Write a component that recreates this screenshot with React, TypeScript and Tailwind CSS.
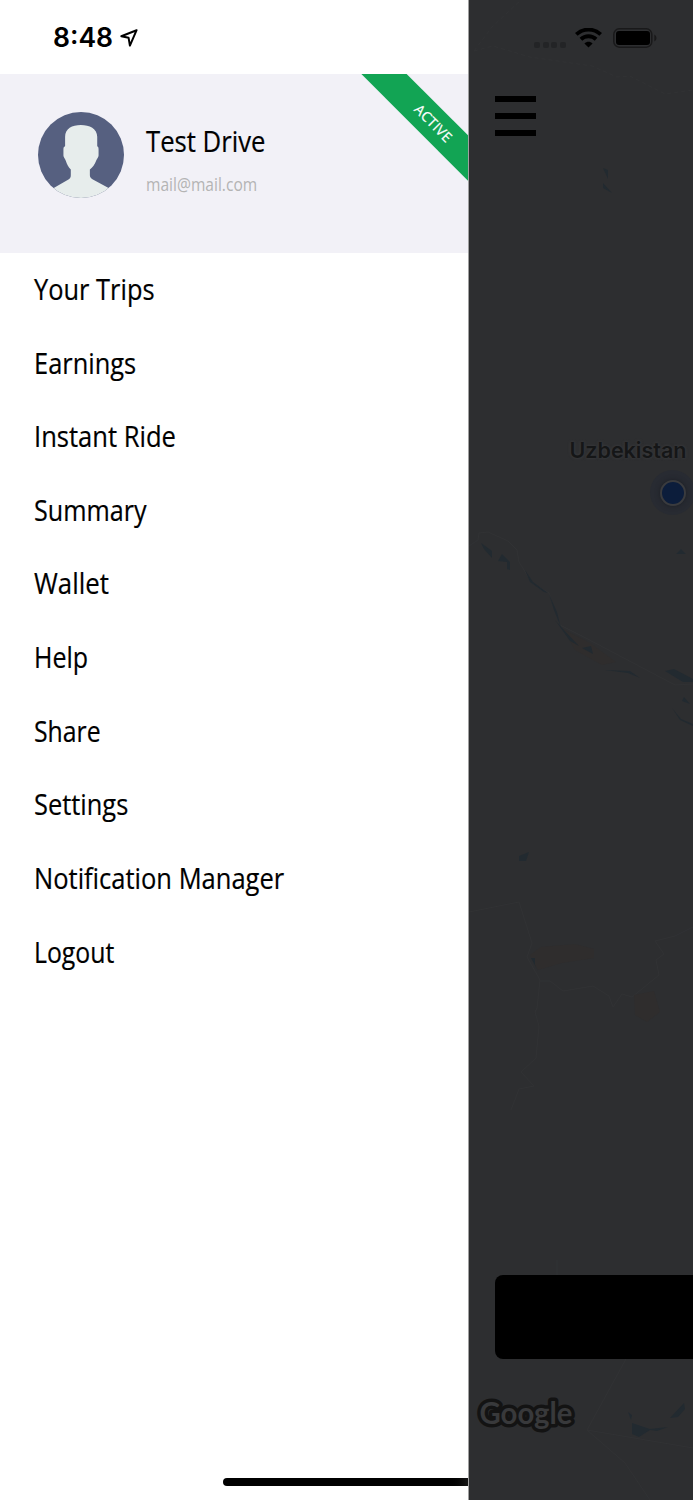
interface MenuItem {
    label: string;
    className: string;
}

const menuItems: MenuItem[] = [
    { label: 'Your Trips', className: 'scale-x-[0.892]' },
    { label: 'Earnings', className: 'scale-x-[0.892]' },
    { label: 'Instant Ride', className: 'scale-x-[0.897]' },
    { label: 'Summary', className: 'scale-x-[0.882]' },
    { label: 'Wallet', className: 'scale-x-[0.905]' },
    { label: 'Help', className: 'scale-x-[0.878]' },
    { label: 'Share', className: 'scale-x-[0.87]' },
    { label: 'Settings', className: 'scale-x-[0.892]' },
    { label: 'Notification Manager', className: 'scale-x-[0.895]' },
    { label: 'Logout', className: 'scale-x-[0.87]' },
];

function LocationArrow() {
    return (
        <svg className="h-[20px] w-[20px]" viewBox="0 0 20 20" fill="none">
            <path
                d="M17.6 2.2L2.3 8.2L9.6 9.8L10.9 17.6Z"
                stroke="#000"
                strokeWidth="2"
                strokeLinejoin="round"
            />
        </svg>
    );
}

function Avatar() {
    return (
        <svg className="h-[86px] w-[86px] shrink-0" viewBox="116 334 257 257">
            <clipPath id="avatar-clip">
                <circle cx="244.5" cy="462.5" r="128.5" />
            </clipPath>
            <g clipPath="url(#avatar-clip)">
                <rect x="116" y="334" width="257" height="257" fill="#566080" />
                <path
                    d="M244 373C218 373 197 384 197 408V436C193 437 192 440 192 446V464C192 470 197 473 199 480C203 491 207 500 214 506V523C214 529 212 533 207 536L163 561L110 595V610H380V595L327 561L280 536C275 533 271 529 271 523V506C279 500 286 490 290 479C292 473 297 470 297 464V446C297 440 296 437 293 436V408C293 384 270 373 244 373Z"
                    fill="#e7edec"
                />
            </g>
        </svg>
    );
}

function WifiIcon() {
    return (
        <svg className="h-[20px] w-[27px]" viewBox="0 0 27 20" fill="none" stroke="#000">
            <path d="M1.3 6.4C8.2 0 18.8 0 25.7 6.4" strokeWidth="3.9" />
            <path d="M5.9 11.2C10.2 7.2 16.8 7.2 21.1 11.2" strokeWidth="3.9" />
            <path d="M9.4 15.4C11.8 13.2 15.2 13.2 17.6 15.4L13.5 19.4Z" fill="#000" stroke="none" />
        </svg>
    );
}

function BatteryIcon() {
    return (
        <svg className="h-[20px] w-[44px]" viewBox="0 0 44 20">
            <rect x="0.8" y="0.8" width="38" height="18.4" rx="5.5" fill="none" stroke="#19191a" strokeWidth="1.5" />
            <rect x="3" y="3" width="34" height="14" rx="3" fill="#000" />
            <path d="M41.3 6.6C44.2 8 44.2 12 41.3 13.4Z" fill="#19191a" />
        </svg>
    );
}

function MapLayer() {
    return (
        <svg className="absolute inset-0 h-full w-full" viewBox="469 0 224 1500">
            {/* borders */}
            <g fill="none" stroke="#313234" strokeWidth="1">
                <path d="M474 51L493 46L530 57L592 66L617 77L630 76L665 94L693 90" strokeDasharray="4 3" />
                <path d="M474 51L492 27L521 0" strokeDasharray="4 3" />
                <path d="M469 546L478 540L479 533L488 532L508 541L517 550L519 562L532 583L549 593L560 625L582 636L675 685L693 684" />
                <path d="M469 912L519 902L532 943L527 957L540 980L537 1008L535 1012L539 1026L536 1058L521 1072L534 1086L519 1089L511 1110" />
                <path d="M540 981H550L563 991L593 986L609 996L613 1007L622 994L632 997L659 975L656 960L664 954L655 941L675 936L693 927" />
                <path d="M557 1260V1276" />
                <path d="M626 1359L587 1430L625 1463L650 1500M587 1430L693 1448" />
            </g>
            {/* sand */}
            <g fill="#2f2d2d">
                <path d="M563 629L590 643L616 662L602 665L575 650Z" />
                <path d="M530 955L541 947L575 944L594 949L594 958L562 963L538 970Z" />
                <path d="M634 995L654 991L660 1012L647 1022L635 1015Z" />
            </g>
            {/* water */}
            <g fill="#222a30">
                <path d="M603 168L608 170V179ZM603 183L612 193L603 188Z" />
                <path d="M481 543L492 551V558L484 549ZM498 561L502 554L510 562V570L507 569V562Z" />
                <path d="M525 570L533 582L548 593L544 592L530 582Z" />
                <path d="M549 594L557 612L561 628L554 610ZM555 620L563 629L579 646L570 641Z" />
                <path d="M582 648L591 646L593 654ZM605 670L630 671L640 678L628 673Z" />
                <path d="M665 671L674 669L693 679V682L683 682ZM676 554L681 549L686 554Z" />
                <path d="M682 701L684 697L690 704ZM672 708L681 719L693 724V726L680 720Z" />
                <path d="M519 856L529 852L526 861H519Z" />
                <path d="M531 958H535V965L538 971Z" />
                <path d="M628 1412L632 1415L631 1420ZM632 1423L650 1429L668 1427L657 1431L650 1430L639 1437L632 1434Z" />
                <path d="M670 1418L684 1403L685 1409L678 1417Z" />
            </g>
        </svg>
    );
}

function GoogleLogo() {
    return (
        <svg className="absolute left-0 top-[1390px] h-[50px] w-[120px]" viewBox="0 0 120 50">
            <text
                x="10.5"
                y="33.5"
                textLength="93"
                lengthAdjust="spacingAndGlyphs"
                fill="#38393b"
                stroke="#131313"
                strokeWidth="7"
                strokeLinejoin="round"
                className="font-['Lato',sans-serif] text-[30px] font-bold [paint-order:stroke]"
            >
                Google
            </text>
        </svg>
    );
}

function Drawer() {
    return (
        <aside className="relative flex h-full w-[469px] shrink-0 flex-col overflow-hidden border-r border-[#a0a0a0] bg-white">
            <div className="flex h-[74px] shrink-0 items-center gap-[6px] pl-[53px] pt-[2px]">
                <span className="font-['Inter',sans-serif] text-[26.5px] font-semibold">8:48</span>
                <LocationArrow />
            </div>

            <header className="relative flex h-[179px] shrink-0 overflow-hidden bg-[#f2f1f7] pl-[38px] pt-[37.5px]">
                <Avatar />
                <div className="ml-[22px] pt-[9.5px]">
                    <h1 className="origin-left scale-x-[0.9] whitespace-nowrap text-[28.5px] leading-[40px] [-webkit-text-stroke:0.2px]">
                        Test Drive
                    </h1>
                    <p className="mt-[11px] origin-left scale-x-[0.89] text-[17.5px] leading-[24px] text-[#b4b4b4]">
                        mail@mail.com
                    </p>
                </div>
                <div className="absolute left-[334px] top-[34px] flex h-[32px] w-[200px] rotate-45 items-center justify-center bg-[#12a454] pb-[1px] pr-[2px] text-[14px] tracking-[0.2px] text-white [-webkit-text-stroke:0.2px]">
                    ACTIVE
                </div>
            </header>

            <nav className="-mt-[0.6px] flex flex-col pl-[33.7px]">
                {menuItems.map((item) => (
                    <a key={item.label} className="flex h-[73.67px] items-center text-[28.5px] [-webkit-text-stroke:0.2px]">
                        <span className={`origin-left whitespace-nowrap ${item.className}`}>{item.label}</span>
                    </a>
                ))}
            </nav>

            {/* home indicator */}
            <div className="absolute left-[222.5px] top-[1478px] h-[8px] w-[260px] rounded-full bg-linear-to-r from-black from-85% to-[#333333]" />
        </aside>
    );
}

export default function App() {
    return (
        <div className="flex h-[1500px] w-[693px] overflow-hidden bg-[#2d2e30] font-['Open_Sans','Noto_Sans',sans-serif] text-black">
            <Drawer />
            <main className="relative min-w-0 flex-1 overflow-hidden">
                <MapLayer />
                <div className="relative flex h-[75px] items-center pl-[65px]">
                    <div className="mt-[14px] flex gap-[2.6px]">
                        <i className="h-[6px] w-[6px] rounded-[2px] bg-[#232426]" />
                        <i className="h-[6px] w-[6px] rounded-[2px] bg-[#232426]" />
                        <i className="h-[6px] w-[6px] rounded-[2px] bg-[#232426]" />
                        <i className="h-[6px] w-[6px] rounded-[2px] bg-[#232426]" />
                    </div>
                    <div className="ml-[9.5px] flex items-center gap-[11px]">
                        <WifiIcon />
                        <BatteryIcon />
                    </div>
                </div>
                <div className="relative ml-[26px] mt-[20.5px] flex w-[41px] flex-col gap-[11px]">
                    <span className="h-[6.3px] bg-black" />
                    <span className="h-[6.3px] bg-black" />
                    <span className="h-[6.3px] bg-black" />
                </div>

                <span className="absolute left-[100.5px] top-[435.5px] font-['Inter',sans-serif] text-[21.5px] font-semibold leading-[28px] text-[#151617] [text-shadow:0_0_3px_#404144]">
                    Uzbekistan
                </span>
                <div className="absolute left-[181px] top-[470px] flex h-[45px] w-[45px] items-center justify-center rounded-full bg-[#282b32]">
                    <div className="h-[26px] w-[26px] rounded-full border-2 border-[#3a3b3e] bg-[#0c1d3b] shadow-[0_0_5px_#1c1f25]" />
                </div>

                <div className="absolute left-[26px] top-[1275px] h-[84px] w-[220px] rounded-lg bg-black" />
                <GoogleLogo />
            </main>
        </div>
    );
}
